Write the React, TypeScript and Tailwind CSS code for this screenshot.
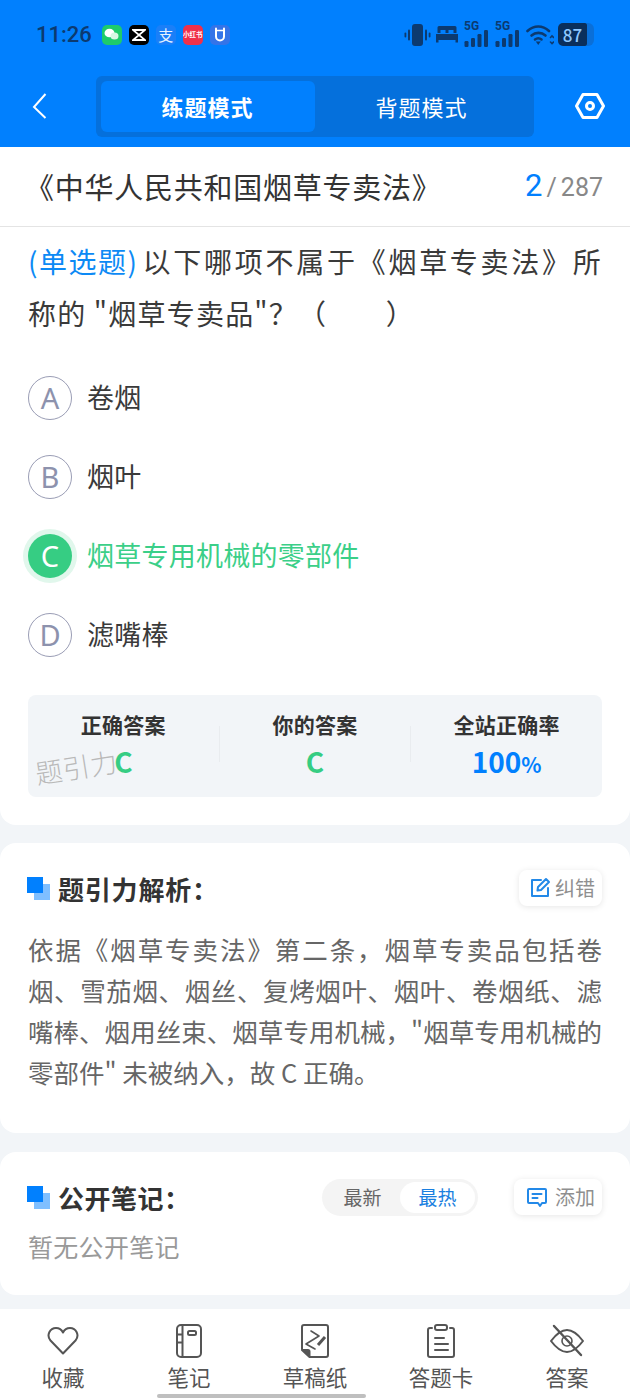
import type { ReactNode } from "react";

const FONT = "font-['Noto_Sans_CJK_SC','Noto_Sans',sans-serif]";

const OPTIONS = [
  { key: "A", text: "卷烟" },
  { key: "B", text: "烟叶" },
  { key: "C", text: "烟草专用机械的零部件", correct: true },
  { key: "D", text: "滤嘴棒" },
];

function StatusIcons() {
  return (
    <div className="flex items-center gap-[4px]">
      <svg className="mr-[1px]" width="27" height="24" viewBox="0 0 27 24" fill="#0c3a70">
        <rect x="8" y="1" width="11" height="22" rx="3" />
        <rect x="4" y="6.500" width="2" height="11" rx="1" />
        <rect x="21" y="6.500" width="2" height="11" rx="1" />
        <rect x="0.500" y="9.500" width="1.800" height="5" rx="0.900" />
        <rect x="24.700" y="9.500" width="1.800" height="5" rx="0.900" />
      </svg>
      <svg className="mr-[2px]" width="22" height="17" viewBox="0 0 22 17" fill="#0c3a70">
        <path d="M3 0h16a1.500 1.500 0 0 1 1.500 1.500V7h-3V4h-5v3h-3V4h-5v3h-3V1.500A1.500 1.500 0 0 1 3 0z" />
        <path d="M0 8h22v8.500h-2.500V14h-17v2.500H0z" />
      </svg>
      {[0, 1].map((i) => (
        <div key={i} className="relative mr-[2px] h-[26px] w-[25px]">
          <span className="absolute left-0 top-[-2px] font-['Roboto',sans-serif] text-[12px] font-bold leading-[12px] text-[#0c3a70]">5G</span>
          <svg className="absolute bottom-0 left-0" width="25" height="18" viewBox="0 0 25 18" fill="#0c3a70">
            <rect x="0.500" y="11" width="4" height="6" rx="1.200" />
            <rect x="7" y="8" width="4" height="9" rx="1.200" />
            <rect x="13.500" y="4" width="4" height="13" rx="1.200" />
            <rect x="20" y="0" width="4" height="17" rx="1.200" />
          </svg>
        </div>
      ))}
      <svg width="28" height="22" viewBox="0 0 28 22" fill="none" stroke="#0c3a70" strokeWidth="2.600" strokeLinecap="round">
        <path d="M1.500 7c6.500-6 15-6 21.500 0" />
        <path d="M5.500 11.500c4-3.500 10-3.500 14 0" />
        <path d="M9 15.500c2-1.500 4.500-1.500 6.500 0" />
        <path d="M9.800 17.500h4.900L12.250 21z" fill="#0c3a70" stroke="none" />
        <path d="M24.500 13.500l1.500-1.500 1.500 1.500M24.500 18l1.500 1.500 1.500-1.500" strokeWidth="1.600" />
      </svg>
      <div className="flex items-center">
        <div className={`flex h-[23px] w-[29px] items-center justify-center rounded-l-[5px] rounded-r-[2px] bg-[#0a2f5c] text-[17px] font-medium text-[#8fc8ff] ${FONT}`}>
          87
        </div>
        <div className="h-[23px] w-[7px] rounded-r-[6px] bg-[#0a6fd8]" />
      </div>
    </div>
  );
}

function AppIcons() {
  return (
    <div className="flex items-center gap-[7px]">
      <div className="flex h-[20px] w-[20px] items-center justify-center rounded-[5px] bg-[#1ecb6b]">
        <svg width="15" height="13" viewBox="0 0 15 13" fill="#fff">
          <ellipse cx="5.500" cy="5" rx="5" ry="4.300" />
          <ellipse cx="10.500" cy="8" rx="4" ry="3.500" fill="#d8f7e4" />
        </svg>
      </div>
      <div className="flex h-[20px] w-[20px] items-center justify-center rounded-[5px] bg-black">
        <svg width="14" height="12" viewBox="0 0 14 12" fill="none" stroke="#fff" strokeWidth="1.800">
          <path d="M1 1h12L1 11h12L1 1z" />
        </svg>
      </div>
      <div className="flex h-[20px] w-[20px] items-center justify-center rounded-[5px] bg-[#1a7ff8] text-[15px] leading-none text-[#e6f2ff]">
        <span className={FONT}>支</span>
      </div>
      <div className={`flex h-[20px] w-[20px] items-center justify-center rounded-[5px] bg-[#f0304a] text-[6.500px] font-bold leading-none text-white ${FONT}`}>
        小红书
      </div>
      <div className="flex h-[20px] w-[20px] items-center justify-center rounded-[5px] bg-[#3474e8]">
        <svg width="14" height="15" viewBox="0 0 14 15" fill="none" stroke="#fff" strokeWidth="2" strokeLinecap="round">
          <path d="M3 1.500v8a4 4 0 0 0 8 0v-8" />
          <path d="M3 3.500h8" strokeWidth="1.500" />
        </svg>
      </div>
    </div>
  );
}

function Header() {
  return (
    <header className="bg-[#0180fe]">
      <div className="flex h-[68px] items-center justify-between pl-[36px] pr-[36px] pt-[1px]">
        <div className="flex items-center gap-[10px]">
          <span className="font-['Roboto',sans-serif] text-[22px] font-medium leading-none text-[#0c3a70]">11:26</span>
          <AppIcons />
        </div>
        <StatusIcons />
      </div>
      <div className="flex h-[79px] items-start justify-between pl-[30px] pr-[25px] pt-[8px]">
        <svg className="mt-[15px]" width="20" height="30" viewBox="0 0 20 30" fill="none" stroke="#fff" strokeWidth="2">
          <path d="M15.500 3L4 16l11.500 11" />
        </svg>
        <div className={`ml-[4px] flex h-[61px] w-[438px] rounded-[6px] bg-[#0570dc] p-[5px] ${FONT}`}>
          <div className="flex w-[214px] items-center justify-center rounded-[6px] bg-[#0180fe] text-[22px] font-bold tracking-[1px] text-white">
            练题模式
          </div>
          <div className="flex flex-1 items-center justify-center text-[22px] tracking-[1px] text-white">背题模式</div>
        </div>
        <svg className="mt-[11px]" width="30" height="38" viewBox="0 0 30 38" fill="none" stroke="#fff" strokeWidth="3" strokeLinejoin="round">
          <path d="M8 7.500h14L28.500 19 22 30.500H8L1.500 19z" />
          <circle cx="15" cy="19" r="3.500" />
        </svg>
      </div>
    </header>
  );
}

function OptionRow({ k, text, correct }: { k: string; text: string; correct?: boolean }) {
  return (
    <div className="flex h-[79px] items-center">
      {correct ? (
        <div className="flex h-[44px] w-[44px] items-center justify-center rounded-full bg-[#36cd83] font-['Noto_Sans',sans-serif] text-[29px] text-white shadow-[0_0_0_5px_#e1f7ec]">
          {k}
        </div>
      ) : (
        <div className="flex h-[44px] w-[44px] items-center justify-center rounded-full border-[1.5px] border-[#9a9db5] font-['Noto_Sans',sans-serif] text-[29px] text-[#8d92ad]">
          {k}
        </div>
      )}
      <span className={`ml-[15px] text-[27px] tracking-[0.25px] ${correct ? "text-[#3bcf88]" : "text-[#3a3a3a]"}`}>{text}</span>
    </div>
  );
}

function Stat({ label, children }: { label: string; children: ReactNode }) {
  return (
    <div className="flex flex-1 flex-col items-center">
      <span className="text-[21px] font-bold leading-[28px] tracking-[0.25px] text-[#333]">{label}</span>
      <div className="mt-[6px] h-[34px] text-[28px] font-bold leading-[34px]">{children}</div>
    </div>
  );
}

function Squares() {
  return (
    <div className="relative -ml-px mr-px h-[23px] w-[23px] shrink-0">
      <div className="absolute bottom-0 right-0 h-[16px] w-[16px] bg-[#7fbfff]" />
      <div className="absolute left-0 top-0 h-[16px] w-[16px] bg-[#0180fe]" />
    </div>
  );
}

function ChipButton({ icon, label, wide }: { icon: ReactNode; label: string; wide?: boolean }) {
  return (
    <div className={`flex h-[36px] items-center rounded-[8px] bg-white pr-[7px] shadow-[0_1px_6px_rgba(0,0,0,0.1)] ${wide ? "gap-[7px] pl-[12px]" : "gap-[4px] pl-[10px]"}`}>
      {icon}
      <span className="text-[20px] text-[#8f8f8f]">{label}</span>
    </div>
  );
}

function BottomTab({ label, children }: { label: string; children: ReactNode }) {
  return (
    <div className="flex w-[126px] flex-col items-center">
      <div className="flex h-[34px] items-center justify-center">{children}</div>
      <span className="mt-[3px] text-[21.500px] leading-[32px] text-[#555]">{label}</span>
    </div>
  );
}

export default function App() {
  return (
    <div lang="zh-CN" className={`relative h-[1400px] w-[630px] overflow-hidden bg-[#f2f5f8] ${FONT}`}>
      <Header />
      <main>
        <section className="rounded-b-[16px] bg-white pb-[28px]">
          <div className="flex h-[80px] items-center justify-between border-b border-[#e4e4e4] pl-[25px] pr-[27px]">
            <h1 className="text-[29px] font-normal tracking-[0.75px] text-[#333]">《中华人民共和国烟草专卖法》</h1>
            <div className="flex items-baseline font-['Roboto',sans-serif] text-[#888]">
              <span className="text-[31px] text-[#0180fe]">2</span>
              <span className="mx-[4px] text-[25px]">/</span>
              <span className="text-[25px]">287</span>
            </div>
          </div>
          <div className="px-[28px] pt-[8px]">
            <p className="text-justify text-[28px] leading-[52px] tracking-[1.2px] text-[#3a3a3a]">
              <span className="mr-[4px] tracking-normal text-[#0d8af5]">(单选题)</span>以下哪项不属于《烟草专卖法》所称的 "烟草专卖品"？（　　）
            </p>
            <div className="mt-[19px]">
              {OPTIONS.map((o) => (
                <OptionRow key={o.key} k={o.key} text={o.text} correct={o.correct} />
              ))}
            </div>
            <div className="relative mt-[21px] flex h-[102px] items-center rounded-[8px] bg-[#f2f5f8] pb-[4px]">
              <Stat label="正确答案">
                <span className="text-[#36cd83]">C</span>
              </Stat>
              <div className="h-[36px] w-px bg-[#e9ecef]" />
              <Stat label="你的答案">
                <span className="text-[#36cd83]">C</span>
              </Stat>
              <div className="h-[36px] w-px bg-[#e9ecef]" />
              <Stat label="全站正确率">
                <span className="text-[#0180fe]">
                  100<span className="text-[21px]">%</span>
                </span>
              </Stat>
              <span className="absolute left-[7px] top-[58px] -rotate-[9deg] text-[27px] font-light leading-none tracking-[0.5px] text-[#b9b9b9]">
                题引力
              </span>
            </div>
          </div>
        </section>

        <section className="mt-[18px] h-[290px] rounded-[16px] bg-white px-[28px] pt-[26px]">
          <div className="flex h-[38px] items-center justify-between">
            <div className="flex items-center gap-[7px]">
              <Squares />
              <h2 className="text-[26px] font-bold tracking-[0.8px] text-[#333]">题引力解析：</h2>
            </div>
            <ChipButton
              label="纠错"
              icon={
                <svg width="22" height="22" viewBox="0 0 22 22" fill="none" stroke="#2389e8" strokeWidth="2" strokeLinecap="round" strokeLinejoin="round">
                  <path d="M12 3H3v16h16v-8" />
                  <path d="M8.500 13.500l.5-3.500 8-8 3 3-8 8z" />
                </svg>
              }
            />
          </div>
          <p className="mt-[21px] text-justify text-[25.500px] leading-[41px] text-[#666]">
            依据《烟草专卖法》第二条，烟草专卖品包括卷烟、雪茄烟、烟丝、复烤烟叶、烟叶、卷烟纸、滤嘴棒、烟用丝束、烟草专用机械，"烟草专用机械的零部件" 未被纳入，故 C 正确。
          </p>
        </section>

        <section className="mt-[19px] h-[143px] rounded-[16px] bg-white px-[28px] pt-[26px]">
          <div className="flex h-[38px] items-center">
            <Squares />
            <h2 className="ml-[7px] text-[26px] font-bold tracking-[0.5px] text-[#333]">公开笔记：</h2>
            <div className="ml-auto flex h-[37px] w-[156px] items-center rounded-full bg-[#f4f4f4] p-[3px] text-[19px]">
              <span className="flex-1 text-center text-[#666]">最新</span>
              <span className="flex h-[31px] w-[75px] items-center justify-center rounded-full bg-white text-[#1a7fe0]">最热</span>
            </div>
            <div className="ml-[36px]">
              <ChipButton
                wide
                label="添加"
                icon={
                  <svg width="22" height="22" viewBox="0 0 22 22" fill="none" stroke="#2389e8" strokeWidth="2" strokeLinecap="round" strokeLinejoin="round">
                    <path d="M3 3h16a1 1 0 0 1 1 1v12a1 1 0 0 1-1 1h-3l-2 3-2-3H3a1 1 0 0 1-1-1V4a1 1 0 0 1 1-1z" />
                    <path d="M6.500 8h9M6.500 12h5" />
                  </svg>
                }
              />
            </div>
          </div>
          <p className="mt-[12px] text-[25px] leading-[36px] tracking-[0.3px] text-[#999]">暂无公开笔记</p>
        </section>
      </main>

      <nav className="mt-[14px] flex h-[91px] bg-white pt-[15px]">
        <BottomTab label="收藏">
          <svg width="32" height="30" viewBox="0 0 32 30" fill="none" stroke="#555" strokeWidth="2" strokeLinejoin="round">
            <path d="M16 27.500L3.500 14.500C-1 9 3 2 9 2c3 0 5.500 1.500 7 4.500C17.500 3.500 20 2 23 2c6 0 10 7 5.500 12.500z" />
          </svg>
        </BottomTab>
        <BottomTab label="笔记">
          <svg width="26" height="34" viewBox="0 0 26 34" fill="none" stroke="#555" strokeWidth="2" strokeLinejoin="round">
            <rect x="1" y="1" width="24" height="32" rx="4" />
            <path d="M6.500 1v32M1 10.500h5.500M1 18.500h5.500" />
            <rect x="12" y="7" width="8" height="4" rx="1.500" />
          </svg>
        </BottomTab>
        <BottomTab label="草稿纸">
          <svg width="28" height="34" viewBox="0 0 28 34" fill="none" stroke="#555" strokeWidth="2" strokeLinejoin="round" strokeLinecap="round">
            <path d="M9 33h16a2 2 0 0 0 2-2V3a2 2 0 0 0-2-2H3a2 2 0 0 0-2 2v22" />
            <path d="M1 26h6a1.500 1.500 0 0 1 1.500 1.500V33z" fill="#555" />
            <path d="M10 7l8 5-13 8 9 5" strokeWidth="1.600" />
            <path d="M17 21l7-8" strokeWidth="3" strokeLinecap="butt" />
          </svg>
        </BottomTab>
        <BottomTab label="答题卡">
          <svg width="28" height="34" viewBox="0 0 28 34" fill="none" stroke="#555" strokeWidth="2" strokeLinejoin="round" strokeLinecap="round">
            <path d="M5 4H3a2 2 0 0 0-2 2v25a2 2 0 0 0 2 2h22a2 2 0 0 0 2-2V6a2 2 0 0 0-2-2h-2" />
            <rect x="8" y="1" width="12" height="5" rx="2" />
            <path d="M8 14h9M8 20h13M8 26h13" />
          </svg>
        </BottomTab>
        <BottomTab label="答案">
          <svg width="36" height="34" viewBox="0 0 36 34" fill="none" stroke="#555" strokeWidth="2" strokeLinecap="round" strokeLinejoin="round">
            <path d="M2 17c6-8 11-11 16-11s10 3 16 11c-6 8-11 11-16 11S8 25 2 17z" />
            <circle cx="18" cy="17" r="5" strokeWidth="1.600" />
            <path d="M5 2l27 29" strokeWidth="2.400" />
          </svg>
        </BottomTab>
      </nav>
      <div className="absolute bottom-[2px] left-[157px] h-[4px] w-[209px] rounded-full bg-[#bfbfbf]" />
    </div>
  );
}
